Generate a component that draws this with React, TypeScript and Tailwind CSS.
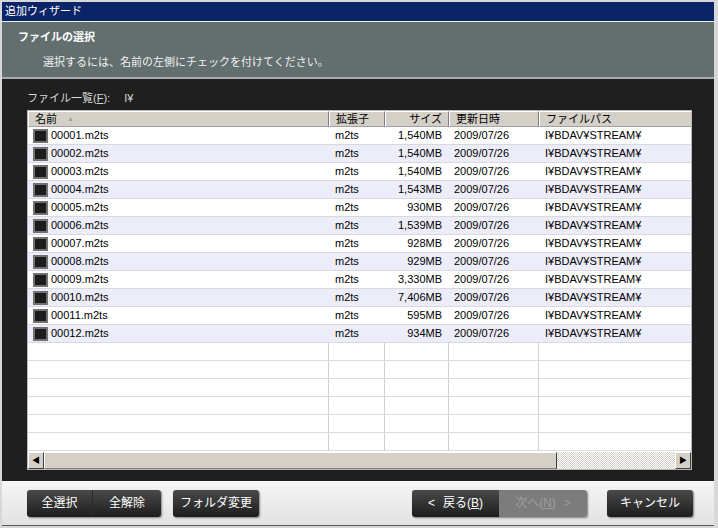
import type { ReactNode } from "react";

const files = [
  ["00001.m2ts", "1,540MB"],
  ["00002.m2ts", "1,540MB"],
  ["00003.m2ts", "1,540MB"],
  ["00004.m2ts", "1,543MB"],
  ["00005.m2ts", "930MB"],
  ["00006.m2ts", "1,539MB"],
  ["00007.m2ts", "928MB"],
  ["00008.m2ts", "929MB"],
  ["00009.m2ts", "3,330MB"],
  ["00010.m2ts", "7,406MB"],
  ["00011.m2ts", "595MB"],
  ["00012.m2ts", "934MB"],
];

const font = { fontFamily: '"Liberation Sans", "Noto Sans CJK JP", sans-serif' };

function HeadCell({ children, className = "" }: { children: ReactNode; className?: string }) {
  return (
    <div
      className={`flex h-full shrink-0 items-center border-t border-l border-t-white border-l-white border-r border-b border-r-[#808080] border-b-[#a0a0a0] bg-[#d4d0c8] px-[6px] ${className}`}
    >
      {children}
    </div>
  );
}

function DarkButton({ children, className = "", disabled = false }: { children: ReactNode; className?: string; disabled?: boolean }) {
  return (
    <div
      className={`flex h-full items-center justify-center text-[12px] ${
        disabled ? "bg-[#7c7c7c] text-[#9c9c9c]" : "bg-linear-to-b from-[#4a4a4a] to-[#1e1e1e] text-white"
      } ${className}`}
    >
      {children}
    </div>
  );
}

function Checkbox() {
  return <span className="inline-block h-[14px] w-[15px] shrink-0 border-2 border-[#727272] bg-[#1c1c1c]" />;
}

export default function App() {
  return (
    <div className="h-[528px] w-[718px] overflow-hidden bg-[#d8d8d8] pt-[2px] pl-[2px] pr-[4px] pb-[2px]" style={font}>
      <div className="flex h-full flex-col">
        {/* title bar */}
        <div className="flex h-[19px] items-center bg-[#0b2367] pl-[3px] text-[11px] text-white">追加ウィザード</div>
        <div className="h-px bg-[#e8eef4]" />
        {/* header */}
        <div className="flex h-[55px] flex-col bg-[#636e6e] text-white">
          <div className="mt-[7px] pl-[16px] text-[11px] font-bold">ファイルの選択</div>
          <div className="mt-[8px] pl-[41px] text-[11px] text-[#f0f0f0]">選択するには、名前の左側にチェックを付けてください。</div>
        </div>
        <div className="h-[2px] bg-[#a8acac]" />
        {/* dark body */}
        <div className="flex h-[402px] flex-col bg-[#1f1f1f] pl-[25px] pr-[22px]">
          <div className="mt-[12px] flex h-[14px] items-center text-[11px] text-[#d8d8d8]">
            <span>
              ファイル一覧(<span className="underline">F</span>):
            </span>
            <span className="ml-[14px]">I¥</span>
          </div>
          <div className="mt-[5px] flex h-[360px] flex-col border border-[#b8b8b8] bg-white">
            {/* column headers */}
            <div className="flex h-[16px] shrink-0 overflow-hidden text-[11px] text-black">
              <HeadCell className="w-[301px]">
                名前
                <span className="ml-[10px] text-[7px] text-[#a0a0a0]">▲</span>
              </HeadCell>
              <HeadCell className="w-[56px]">拡張子</HeadCell>
              <HeadCell className="w-[64px] justify-end">サイズ</HeadCell>
              <HeadCell className="w-[90px]">更新日時</HeadCell>
              <HeadCell className="w-[160px]">ファイルパス</HeadCell>
            </div>
            {/* rows */}
            <div className="flex h-[325px] shrink-0 flex-col overflow-hidden text-[11px] text-black">
              {files.map(([name, size], i) => (
                <div
                  key={name}
                  className={`flex h-[18px] shrink-0 items-center border-b border-[#d8d8e0] ${i % 2 ? "bg-[#ededfa]" : "bg-white"}`}
                >
                  <div className="flex w-[301px] shrink-0 items-center gap-[3px] pl-[5px]">
                    <Checkbox />
                    <span>{name}</span>
                  </div>
                  <div className="w-[56px] shrink-0 pl-[6px]">m2ts</div>
                  <div className="w-[64px] shrink-0 pr-[7px] text-right">{size}</div>
                  <div className="w-[90px] shrink-0 pl-[5px]">2009/07/26</div>
                  <div className="shrink-0 pl-[6px]">I¥BDAV¥STREAM¥</div>
                </div>
              ))}
              {[0, 1, 2, 3, 4, 5].map((k) => (
                <div key={k} className="flex h-[18px] shrink-0 border-b border-[#dcdcdc]">
                  <div className="w-[301px] shrink-0 border-r border-[#d0d0d0]" />
                  <div className="w-[56px] shrink-0 border-r border-[#d0d0d0]" />
                  <div className="w-[64px] shrink-0 border-r border-[#d0d0d0]" />
                  <div className="w-[90px] shrink-0 border-r border-[#d0d0d0]" />
                  <div className="flex-1" />
                </div>
              ))}
            </div>
            {/* horizontal scrollbar */}
            <div className="flex h-[17px] shrink-0 items-stretch bg-[#d4d0c8]">
              <div className="flex w-[16px] items-center justify-center border-t border-l border-t-white border-l-white border-r border-b border-r-[#404040] border-b-[#404040] bg-[#d4d0c8] text-[8px] text-black">
                ◀
              </div>
              <div className="w-[513px] border-t border-l border-t-white border-l-white border-r border-b border-r-[#404040] border-b-[#808080] bg-[#d4d0c8]" />
              <div className="flex-1 bg-[repeating-conic-gradient(#ffffff_0_25%,#d4d0c8_0_50%)] bg-size-[2px_2px]" />
              <div className="flex w-[16px] items-center justify-center border-t border-l border-t-white border-l-white border-r border-b border-r-[#404040] border-b-[#404040] bg-[#d4d0c8] text-[8px] text-black">
                ▶
              </div>
            </div>
          </div>
        </div>
        {/* footer */}
        <div className="flex h-[44px] items-center bg-linear-to-b from-[#f6f6f6] to-[#e2e2e2] pl-[25px] pr-[21px]">
          <div className="flex h-[27px] w-[134px] overflow-hidden rounded-[3px] shadow-[1px_1px_2px_rgba(0,0,0,0.45)]">
            <DarkButton className="w-[66px] border-r border-[#2a2a2a]">全選択</DarkButton>
            <DarkButton className="flex-1">全解除</DarkButton>
          </div>
          <div className="ml-[12px] h-[27px] w-[86px] overflow-hidden rounded-[3px] shadow-[1px_1px_2px_rgba(0,0,0,0.45)]">
            <DarkButton>フォルダ変更</DarkButton>
          </div>
          <div className="ml-auto flex h-[27px] w-[175px] overflow-hidden rounded-[3px] shadow-[1px_1px_2px_rgba(0,0,0,0.45)]">
            <DarkButton className="w-[87px] gap-[8px]">
              <span>&lt;</span>
              <span>
                戻る(<span className="underline">B</span>)
              </span>
            </DarkButton>
            <DarkButton disabled className="flex-1 gap-[8px]">
              <span>
                次へ(<span className="underline">N</span>)
              </span>
              <span>&gt;</span>
            </DarkButton>
          </div>
          <div className="ml-[20px] h-[27px] w-[86px] overflow-hidden rounded-[3px] shadow-[1px_1px_2px_rgba(0,0,0,0.45)]">
            <DarkButton>キャンセル</DarkButton>
          </div>
        </div>
        <div className="h-px bg-[#5a5a5a]" />
      </div>
    </div>
  );
}
